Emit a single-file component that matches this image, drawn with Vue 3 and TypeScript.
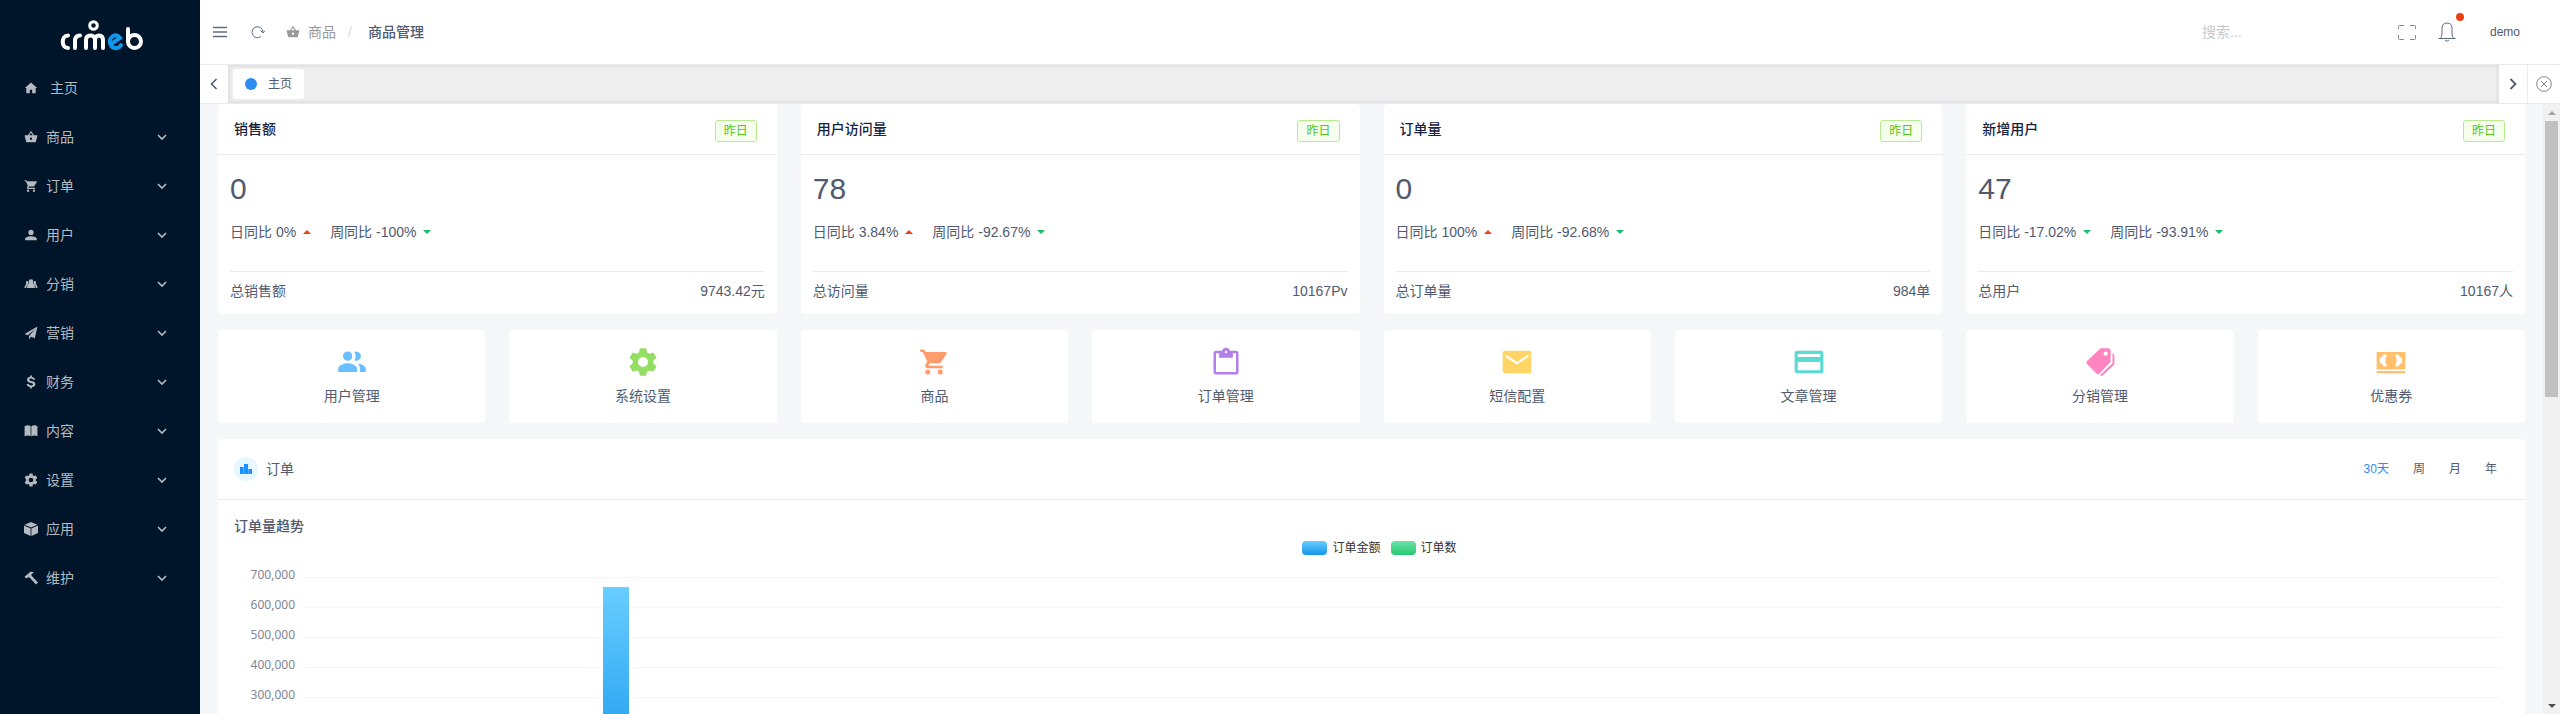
<script setup lang="ts">
interface MenuItem { label: string; icon: string; leaf?: boolean }
interface Rate { label: string; value: string; up: boolean }
interface Stat { title: string; value: string; rates: Rate[]; totalLabel: string; total: string }
interface Shortcut { label: string; icon: string; color: string }

const icons: Record<string, string> = {
  home: 'M12 2.5L1.5 12H4v9h6v-6h4v6h6v-9h2.5z',
  basket: 'M17.2 9l-4.4-6.6a1 1 0 0 0-1.6 0L6.800 9H2c-.6 0-1 .5-1 1l2.600 9.500c.2.900 1 1.500 1.900 1.500h13c.9 0 1.700-.6 1.900-1.500L23 10c0-.5-.4-1-1-1zM9 9l3-4.400L15 9zm3 8a2 2 0 1 1 0-4 2 2 0 0 1 0 4z',
  cart: 'M7 18a2 2 0 1 0 0 4 2 2 0 0 0 0-4zM1 2v2h2l3.600 7.600-1.400 2.400C4.500 15.400 5.500 17 7 17h12v-2H7.400l1.100-2h7.500c.7 0 1.400-.4 1.700-1L22 5.500A1 1 0 0 0 21.100 4H5.200l-.9-2zm16 16a2 2 0 1 0 0 4 2 2 0 0 0 0-4z',
  person: 'M12 12a4.500 4.500 0 1 0 0-9 4.500 4.500 0 0 0 0 9zm0 2c-3.500 0-10 1.500-10 4.500V21h20v-2.500c0-3-6.500-4.500-10-4.500z',
  group: 'M12 4a3.500 3.500 0 0 1 3.500 4v3l2 2c1 1 1 3 1 6h-13c0-3 0-5 1-6l2-2V8A3.500 3.500 0 0 1 12 4zM5.500 7c1.200 0 2 .7 2 2v2.500L5 14c-.8 1-.8 3-.8 5H1c0-3 .5-4.500 1.500-5.500l1-1V9c0-1.300.8-2 2-2zm13 0c-1.200 0-2 .7-2 2v2.500L19 14c.8 1 .8 3 .8 5H23c0-3-.5-4.500-1.500-5.500l-1-1V9c0-1.300-.8-2-2-2z',
  plane: 'M23 1L1 13.500l5.500 2.300L19 5.500 8.700 17v6l3.400-4.500 6.400 2.700z',
  dollar: 'M10.500 1h3v2.300c3 .4 5 2 5.400 4.700h-3.700c-.4-1.300-1.500-1.900-3.200-1.900-1.800 0-2.900.7-2.900 1.900 0 3 10.400.8 10.400 7.800 0 2.900-2.300 4.600-6 5V23h-3v-2.200c-3.500-.4-5.700-2.200-6-5.200h3.800c.3 1.600 1.700 2.300 3.800 2.300 2.200 0 3.400-.7 3.400-2 0-3.300-10.300-1-10.300-7.800 0-2.700 2.100-4.500 5.300-4.900z',
  book: 'M1 4c3.500-2.500 7.500-2.500 10.400 0v17c-3-2-7-2-10.400 0zm11.600 0c3-2.500 7-2.500 10.400 0v17c-3.500-2-7.500-2-10.400 0z',
  gear: 'M9.500 1h5l.7 3.200 1.900 1.100 3.200-1 2.500 4.300-2.500 2.200v2.400l2.500 2.200-2.500 4.300-3.200-1-1.900 1.100-.7 3.200h-5l-.7-3.200-1.900-1.100-3.200 1-2.500-4.300 2.500-2.200v-2.400L1.200 8.600l2.500-4.300 3.200 1 1.900-1.100zM12 8a4 4 0 1 0 0 8 4 4 0 0 0 0-8z',
  cube: 'M12 0L23 4.500 12 9.500 1 4.500zM0 6l11.300 5v13L0 19zm24 0l-11.300 5v13L24 19z',
  hammer: 'M1 10l9-8c3-1.500 5.500-.5 7 .5l-4 2.500v3L24 19.500 20.500 23 9.500 11l-2.300-.5L3.500 13z',
  people: 'M8.500 11a3.700 3.700 0 1 0 0-7.400 3.700 3.700 0 0 0 0 7.400zm7 0a3.700 3.700 0 1 0-1.700-7c1.500 2 1.500 4.500 0 6.500.5.300 1 .5 1.700.5zM8.500 13C5.500 13 1 14.500 1 17.500V20h15v-2.500c0-3-4.500-4.500-7.500-4.500zm8 .2c1.200 1 1.800 2.500 1.800 4.300V20H23v-2.500c0-2.500-3.500-4-6.500-4.300z',
  clipboard: 'M20 3h-4.900a3.200 3.200 0 0 0-6.200 0H4a2 2 0 0 0-2 2v15c0 1.100.9 2 2 2h16a2 2 0 0 0 2-2V5a2 2 0 0 0-2-2zm-8 0a1 1 0 1 1 0 2 1 1 0 0 1 0-2zm8 17H4V5h2.500v3.500h11V5H20z',
  mail: 'M21.500 3h-19a2 2 0 0 0-2 2v14c0 1.100.9 2 2 2h19a2 2 0 0 0 2-2V5a2 2 0 0 0-2-2zm-.5 5l-9 6-9-6V6l9 6 9-6z',
  card: 'M21.500 3h-19a2 2 0 0 0-2 2v14c0 1.100.9 2 2 2h19a2 2 0 0 0 2-2V5a2 2 0 0 0-2-2zM21 18.500H3V12h18zM21 8H3V5.500h18z',
  tags: 'M18.500 1h-6L1.800 11a2 2 0 0 0 0 2.800L9 21a2 2 0 0 0 2.800 0L20.500 12V3a2 2 0 0 0-2-2zM16.500 7a1.700 1.700 0 1 1 0-3.400 1.700 1.700 0 0 1 0 3.400zM22 5v8L11.500 23h1.800a2 2 0 0 0 1.400-.6L23.500 14V6.500A2 2 0 0 0 22 5z',
  money: 'M.5 4h23v14H.5zM7.500 6H6C5.500 7.500 4.500 8.500 3 9v3.500c1.500.5 2.500 1.500 3 3h1.500L9 15c-2-2.500-2-6 0-8.500zm9 0L15 6.500c2 2.500 2 6 0 8.500l1.500.5H18c.5-1.500 1.500-2.500 3-3V9c-1.500-.5-2.500-1.500-3-3zM.5 19.200h23V21H.5z',
}

const menu: MenuItem[] = [
  { label: '主页', icon: 'home', leaf: true },
  { label: '商品', icon: 'basket' },
  { label: '订单', icon: 'cart' },
  { label: '用户', icon: 'person' },
  { label: '分销', icon: 'group' },
  { label: '营销', icon: 'plane' },
  { label: '财务', icon: 'dollar' },
  { label: '内容', icon: 'book' },
  { label: '设置', icon: 'gear' },
  { label: '应用', icon: 'cube' },
  { label: '维护', icon: 'hammer' },
]

const stats: Stat[] = [
  { title: '销售额', value: '0', rates: [{ label: '日同比', value: '0%', up: true }, { label: '周同比', value: '-100%', up: false }], totalLabel: '总销售额', total: '9743.42元' },
  { title: '用户访问量', value: '78', rates: [{ label: '日同比', value: '3.84%', up: true }, { label: '周同比', value: '-92.67%', up: false }], totalLabel: '总访问量', total: '10167Pv' },
  { title: '订单量', value: '0', rates: [{ label: '日同比', value: '100%', up: true }, { label: '周同比', value: '-92.68%', up: false }], totalLabel: '总订单量', total: '984单' },
  { title: '新增用户', value: '47', rates: [{ label: '日同比', value: '-17.02%', up: false }, { label: '周同比', value: '-93.91%', up: false }], totalLabel: '总用户', total: '10167人' },
]

const shortcuts: Shortcut[] = [
  { label: '用户管理', icon: 'people', color: '#69c0ff' },
  { label: '系统设置', icon: 'gear', color: '#95de64' },
  { label: '商品', icon: 'cart', color: '#ff9c6e' },
  { label: '订单管理', icon: 'clipboard', color: '#b37feb' },
  { label: '短信配置', icon: 'mail', color: '#ffd666' },
  { label: '文章管理', icon: 'card', color: '#5cdbd3' },
  { label: '分销管理', icon: 'tags', color: '#ff85c0' },
  { label: '优惠券', icon: 'money', color: '#ffc069' },
]

const periods = ['30天', '周', '月', '年']
const ticks = ['700,000', '600,000', '500,000', '400,000', '300,000']
const lineCount = 8
const bars = [{ index: 4, value: 667000 }]
const days = 30
const maxValue = 700000
const barStyle = (bar: { index: number; value: number }) => ({
  left: `${((bar.index + 0.1) / days) * 100}%`,
  height: `${(bar.value / maxValue) * 100}%`,
})
</script>

<template>
  <div class="layout">
    <aside class="sider">
      <div class="logo">
        <svg width="86" height="32" viewBox="0 0 86 32" role="img" aria-label="crmeb" fill="none" stroke="#fff" stroke-width="4" stroke-linecap="round">
          <path d="M9 15.500C2 15.500 2 28 9 28M16 28V21q0-5.500 5-5.500M27 28V20q0-4.500 4.500-4.500T36 20v8M36 20q0-4.500 4-4.500t4 4.500v8" />
          <circle cx="34.500" cy="5.500" r="3.800" stroke-width="3" />
          <path d="M69 9v12" /><circle cx="75.500" cy="21.500" r="6.500" />
          <path d="M52 24l9-6q-3-4-7-2-4 3-3 7 2 6 7 5 3-.5 4-3" stroke="#1296e8" />
        </svg>
      </div>
      <nav>
        <a v-for="m in menu" :key="m.label" href="#" class="menu-item" :class="{ leaf: m.leaf }">
          <svg class="menu-icon" viewBox="0 0 24 24"><path :d="icons[m.icon]" fill="currentColor" fill-rule="evenodd" /></svg>
          <span>{{ m.label }}</span>
          <svg v-if="!m.leaf" class="arrow" viewBox="0 0 10 10"><path d="M1 3l4 4 4-4" fill="none" stroke="currentColor" stroke-width="1.600" /></svg>
        </a>
      </nav>
    </aside>

    <div class="main">
      <header class="header">
        <button class="icon-btn" aria-label="菜单">
          <svg width="14" height="14" viewBox="0 0 14 14"><path d="M0 2.500h14M0 7h14M0 11.500h14" stroke="currentColor" stroke-width="1.400" /></svg>
        </button>
        <button class="icon-btn refresh" aria-label="刷新">
          <svg width="14" height="14" viewBox="0 0 14 14" fill="none" stroke="currentColor"><path d="M10 11.500A5.500 5.500 0 1 1 12 7" /><path d="M9.500 5.500L12 8l2-2.500" /></svg>
        </button>
        <div class="crumbs">
          <a href="#" class="crumb"><svg width="14" height="14" viewBox="0 0 24 24"><path :d="icons.basket" fill="currentColor" fill-rule="evenodd" /></svg>商品</a>
          <span class="slash">/</span>
          <span class="current">商品管理</span>
        </div>
        <input class="search" type="text" placeholder="搜索..." aria-label="搜索" />
        <button class="icon-btn full" aria-label="全屏">
          <svg width="18" height="18" viewBox="0 0 18 18" fill="none" stroke="currentColor"><path d="M.5 6V3.500q0-1 1-1H6M12 2.500h4.500q1 0 1 1V6M17.500 12v3.500q0 1-1 1H12M6 16.500H1.500q-1 0-1-1V12" /></svg>
        </button>
        <button class="icon-btn bell" aria-label="通知">
          <svg width="18" height="20" viewBox="0 0 18 20" fill="none" stroke="currentColor"><path d="M.5 16.500h17M2.500 16q1.500-1 1.500-5V6.500Q4 1 9 1t5 5.500V11q0 4 1.500 5M7 18q2 2.500 4 0" /></svg>
          <i class="dot"></i>
        </button>
        <button class="user">demo</button>
      </header>

      <div class="tabs">
        <button class="tab-btn" aria-label="向左"><svg width="12" height="12" viewBox="0 0 12 12"><path d="M8.500 1L3.500 6l5 5" fill="none" stroke="currentColor" stroke-width="1.600" /></svg></button>
        <div class="tab-track"><button class="tab"><i></i>主页</button></div>
        <button class="tab-btn" aria-label="向右"><svg width="12" height="12" viewBox="0 0 12 12"><path d="M3.500 1l5 5-5 5" fill="none" stroke="currentColor" stroke-width="1.800" /></svg></button>
        <button class="tab-btn close" aria-label="关闭"><svg width="16" height="16" viewBox="0 0 16 16" fill="none" stroke="currentColor"><circle cx="8" cy="8" r="7.300" /><path d="M5 5l6 6M11 5l-6 6" /></svg></button>
      </div>

      <div class="viewport">
        <main class="content">
          <section class="stats">
            <article v-for="s in stats" :key="s.title" class="card">
              <div class="stat-head"><h2>{{ s.title }}</h2><span class="tag">昨日</span></div>
              <div class="stat-body">
                <div class="value">{{ s.value }}</div>
                <div class="rates">
                  <span v-for="r in s.rates" :key="r.label" class="rate">{{ r.label }} {{ r.value }}<i :class="r.up ? 'up' : 'down'"></i></span>
                </div>
                <div class="total"><span>{{ s.totalLabel }}</span><span>{{ s.total }}</span></div>
              </div>
            </article>
          </section>

          <section class="shortcuts">
            <a v-for="c in shortcuts" :key="c.label" href="#" class="card shortcut">
              <svg width="30" height="30" viewBox="0 0 24 24" :style="{ color: c.color }"><path :d="icons[c.icon]" fill="currentColor" fill-rule="evenodd" /></svg>
              <span>{{ c.label }}</span>
            </a>
          </section>

          <section class="card orders">
            <div class="orders-head">
              <span class="avatar"><svg width="12" height="10" viewBox="0 0 12 10"><path d="M0 3h3.700v7H0zM4 0h4v10H4zM8.300 5H12v5H8.300z" fill="#1890ff" /></svg></span>
              <span class="orders-title">订单</span>
              <div class="periods"><button v-for="(p, i) in periods" :key="p" :class="{ active: i === 0 }">{{ p }}</button></div>
            </div>
            <h3>订单量趋势</h3>
            <div class="legend">
              <span><i class="blue"></i>订单金额</span><span><i class="green"></i>订单数</span>
            </div>
            <div class="chart">
              <div class="axis"><span v-for="t in ticks" :key="t">{{ t }}</span></div>
              <div class="plot">
                <i v-for="n in lineCount" :key="n" class="line"></i>
                <div class="bars"><div v-for="b in bars" :key="b.index" class="bar" :style="barStyle(b)"></div></div>
              </div>
            </div>
          </section>
        </main>
        <div class="scrollbar" aria-hidden="true"><i class="sb-up"></i><div class="sb-rail"><div class="thumb"></div></div><i class="sb-down"></i></div>
      </div>
    </div>
  </div>
</template>

<style>
body { margin: 0; }
</style>

<style scoped>
* { box-sizing: border-box; }
.layout { display: flex; height: 100vh; overflow: hidden; background: #f5f7f9; color: #515a6e; font: 14px/20px "Liberation Sans", "Noto Sans CJK SC", sans-serif; }
button { border: 0; padding: 0; background: none; font: inherit; color: inherit; cursor: pointer; }
a { color: inherit; text-decoration: none; }
svg { display: block; flex: none; }
.sider { flex: 0 0 200px; background: #001529; color: #b5bac1; }
.logo { height: 63px; display: flex; justify-content: center; align-items: center; padding: 8px 0 0 4px; }
.menu-item { display: flex; align-items: center; height: 49px; padding: 0 33px 0 24px; gap: 8px; }
.menu-item.leaf { gap: 12px; }
.menu-icon { width: 14px; height: 14px; }
.arrow { width: 10px; height: 10px; margin-left: auto; }
.main { flex: 1; min-width: 0; display: flex; flex-direction: column; }
.header { flex: 0 0 65px; display: flex; align-items: center; padding: 0 40px 0 13px; background: #fff; border-bottom: 1px solid #e8eaec; }
.icon-btn { display: flex; color: #606b80; }
.refresh { margin-left: 24px; }
.crumbs { display: flex; align-items: center; margin-left: 21px; }
.crumb { display: flex; align-items: center; gap: 8px; color: #999; }
.slash { margin: 0 16px 0 12px; color: #dcdee2; }
.current { font-weight: 500; color: #515a6e; }
.search { margin-left: auto; width: 160px; height: 32px; padding: 0; border: 0; outline: 0; font: inherit; color: #515a6e; }
.search::placeholder { color: #c5c8ce; }
.full { margin-left: 36px; color: #808695; }
.bell { position: relative; margin-left: 22px; }
.dot { position: absolute; top: -9px; right: -8px; width: 8px; height: 8px; border-radius: 50%; background: #ed4014; }
.user { margin-left: 34px; font-size: 12px; }
.tabs { flex: 0 0 39px; display: flex; background: #fff; border-bottom: 1px solid #e8eaec; }
.tab-btn { flex: 0 0 28px; display: flex; align-items: center; justify-content: center; color: #515a6e; }
.close { flex-basis: 33px; border-left: 1px solid #e8eaec; color: #808695; }
.tab-track { flex: 1; display: flex; align-items: center; padding: 0 5px; background: #efefef; box-shadow: inset 0 0 3px 2px rgba(100, 100, 100, .1); }
.tab { display: flex; align-items: center; gap: 11px; height: 30px; padding: 0 12px; border-radius: 3px; background: #fff; font-size: 12px; }
.tab i { width: 12px; height: 12px; border-radius: 50%; background: #2d8cf0; }
.viewport { flex: 1; min-height: 0; display: flex; }
.content { flex: 1; min-width: 0; overflow: hidden; padding: 0 18px; }
.card { background: #fff; border-radius: 4px; }
.stats { display: grid; grid-template-columns: repeat(4, 1fr); gap: 24px; }
.stat-head { display: flex; align-items: center; justify-content: space-between; height: 51px; padding: 0 20px 0 16px; border-bottom: 1px solid #e8eaec; }
h2 { margin: 0; font-size: 14px; line-height: 20px; font-weight: 500; color: #17233d; }
.tag { height: 22px; padding: 0 8px; border: 1px solid #b7eb8f; border-radius: 3px; background: #f6ffed; color: #52c41a; font-size: 12px; line-height: 20px; margin-top: 3px; }
.stat-body { padding: 12px 12px 8px; }
.value { font-size: 30px; line-height: 44px; }
.rates { display: flex; gap: 19px; margin-top: 11px; height: 49px; }
.rate { display: flex; align-items: center; height: 20px; }
.rate i { margin-left: 7px; border: 4px solid transparent; border-top-width: 0; border-bottom-color: #ed4014; }
.rate i.down { border-top: 4px solid #19be6b; border-bottom-width: 0; }
.total { display: flex; justify-content: space-between; padding-top: 9px; border-top: 1px solid #e8eaec; height: 35px; }
.shortcuts { display: grid; grid-template-columns: repeat(8, 1fr); gap: 24px; margin: 16px 0; }
.shortcut { display: flex; flex-direction: column; align-items: center; gap: 9px; height: 93px; padding-top: 17px; }
.orders-head { display: flex; align-items: center; height: 61px; padding: 0 28px 0 16px; border-bottom: 1px solid #e8eaec; }
.avatar { display: flex; align-items: center; justify-content: center; width: 24px; height: 24px; border-radius: 50%; background: #e6f7ff; }
.orders-title { margin-left: 8px; }
.periods { display: flex; gap: 24px; margin-left: auto; font-size: 12px; }
.periods .active { color: #2d8cf0; }
h3 { margin: 16px 16px 0; font-size: 14px; line-height: 20px; font-weight: 500; }
.legend { display: flex; justify-content: center; gap: 10px; margin-top: 2px; padding-left: 16px; font-size: 12px; color: #333; }
.legend span { display: flex; align-items: center; gap: 5px; }
.legend i { width: 25px; height: 14px; border-radius: 4px; }
.blue { background: linear-gradient(#69cdff, #1495eb); }
.green { background: linear-gradient(#6fe0a7, #25c972); }
.chart { display: flex; gap: 8px; margin: 7px 24px 24px 16px; }
.axis { width: 61px; display: flex; flex-direction: column; gap: 10px; text-align: right; font: 12px/20px "Noto Sans", sans-serif; color: #808695; }
.plot { position: relative; flex: 1; display: flex; flex-direction: column; gap: 29px; padding-top: 12px; }
.line { height: 1px; background: #f4f5f7; }
.bars { position: absolute; inset: 12px 0 auto; height: 211px; }
.bar { position: absolute; bottom: 0; width: 26px; background: linear-gradient(#69cdff, #1495eb); }
.scrollbar { flex: 0 0 17px; display: flex; flex-direction: column; align-items: center; background: #f1f1f1; }
.sb-up, .sb-down { flex: 0 0 17px; display: flex; align-items: center; }
.sb-up::before, .sb-down::before { content: ""; border: 4px solid transparent; border-top-width: 0; border-bottom-color: #a3a3a3; }
.sb-down::before { border-top: 4px solid #505050; border-bottom-width: 0; }
.sb-rail { flex: 1; width: 13px; }
.thumb { height: 48%; background: #c1c1c1; }
</style>
